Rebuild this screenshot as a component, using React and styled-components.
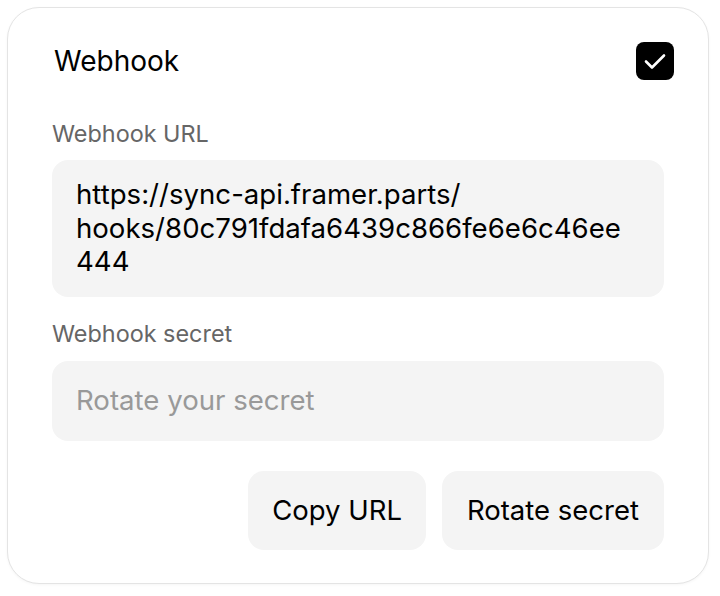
import React from "react";
import styled, { createGlobalStyle } from "styled-components";

const Global = createGlobalStyle`
  html, body { margin: 0; padding: 0; background: #ffffff; }
  body { font-family: Inter, "Noto Sans", sans-serif; -webkit-font-smoothing: antialiased; }
  * { box-sizing: border-box; }
`;

const Page = styled.div`
  padding: 7px 11px 12px 7px;
`;

const Card = styled.div`
  width: 702px;
  height: 577px;
  border: 1.5px solid #e4e4e4;
  border-radius: 32px;
  background: #fff;
  padding: 33.5px 44px 34px 44px;
  display: flex;
  flex-direction: column;
  box-shadow: 0 1px 3px rgba(0,0,0,0.04);
`;

const Header = styled.div`
  display: flex;
  align-items: center;
  justify-content: space-between;
  height: 38px;
  padding-left: 2px;
  margin-right: -10px;
`;

const Title = styled.div`
  font-size: 28px;
  color: #000;
  font-weight: 420;
`;

const Check = styled.div`
  width: 38px;
  height: 38px;
  border-radius: 8px;
  background: #000;
  display: flex;
`;

const Field = styled.div`
  display: flex;
  flex-direction: column;
  gap: 12.5px;
  margin-top: ${(p) => p.$mt}px;
`;

const Label = styled.div`
  font-size: 23.4px;
  line-height: 28px;
  color: #666;
`;

const Box = styled.div`
  background: #f4f4f4;
  border-radius: 16px;
  padding: ${(p) => (p.$multi ? "18px 40px 18px 24px" : "23px 24px")};
  font-size: 27.6px;
  line-height: 33.5px;
  color: ${(p) => (p.$placeholder ? "#999" : "#000")};
  word-break: break-all;
  min-height: 80px;
`;

const Actions = styled.div`
  display: flex;
  justify-content: flex-end;
  gap: 16px;
  margin-top: 30px;
`;

const Button = styled.button`
  height: 79px;
  padding: 0 ${(p) => (p.$tight ? 24 : 25)}px;
  border: none;
  border-radius: 16px;
  background: #f4f4f4;
  font-family: inherit;
  font-size: 27.5px;
  color: #000;
  cursor: pointer;
`;

export default function App() {
  return (
    <>
      <Global />
      <Page>
        <Card>
          <Header>
            <Title>Webhook</Title>
            <Check>
              <svg width="38" height="38" viewBox="0 0 38 38" fill="none">
                <path d="M10 19.5l6 6L28 13.5" stroke="#fff" strokeWidth="2.6" strokeLinecap="round" strokeLinejoin="round" />
              </svg>
            </Check>
          </Header>
          <Field $mt={40}>
            <Label>Webhook URL</Label>
            <Box $multi>
              https://sync-api.framer.parts/
              <br />
              hooks/80c791fdafa6439c866fe6e6c46ee444
            </Box>
          </Field>
          <Field $mt={23.5}>
            <Label>Webhook secret</Label>
            <Box $placeholder>Rotate your secret</Box>
          </Field>
          <Actions>
            <Button $tight>Copy URL</Button>
            <Button>Rotate secret</Button>
          </Actions>
        </Card>
      </Page>
    </>
  );
}
